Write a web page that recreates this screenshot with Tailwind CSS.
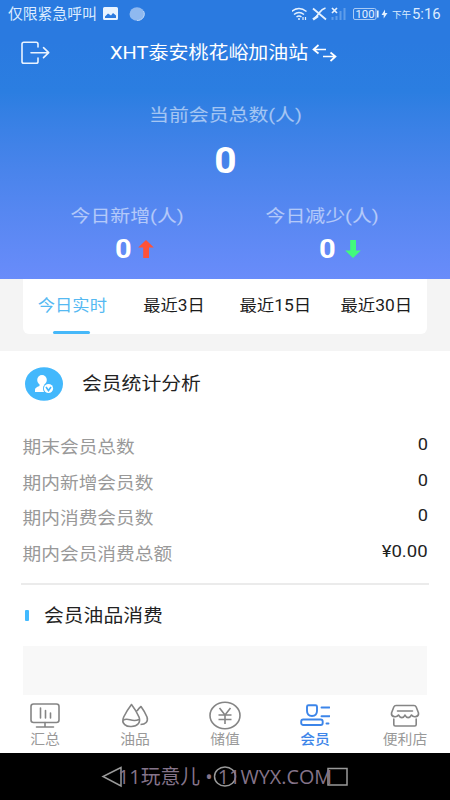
<!DOCTYPE html>
<html lang="zh-CN">
<head>
<meta charset="utf-8">
<title>会员</title>
<script src="https://cdn.jsdelivr.net/npm/@tailwindcss/browser@4"></script>
</head>
<body class="w-[450px] h-[800px] overflow-hidden bg-white font-['Roboto','Noto_Sans_CJK_SC',sans-serif]">
<div class="flex flex-col w-[450px] h-[800px]">
  <header class="h-[279px] shrink-0 bg-linear-to-b from-[#2a7ae0] from-15% via-[#2b7ee1] via-33% to-[#698cfa] text-white">
    <div class="h-7 flex items-center pl-2 pr-[10px] text-[#dcecff]">
      <span class="text-[14.8px] leading-7 whitespace-nowrap w-[89px]">仅限紧急呼叫</span>
      <svg class="ml-[6px]" width="15" height="14" viewBox="0 0 15 14"><path fill="#e8f3ff" fill-rule="evenodd" d="M1.500 0h12q1.500 0 1.500 1.500v10q0 1.500-1.500 1.500h-12Q0 13 0 11.500v-10Q0 0 1.500 0ZM2 11h11V8.500L10 6 8 8.500 5 6.500 2 9.500Z"/></svg>
      <svg class="ml-[11px]" width="16" height="14" viewBox="0 0 16 14"><ellipse cx="8" cy="7" rx="7.500" ry="6.800" fill="#8fb9f0"/><path d="M8 13.500A7 6.500 0 0 0 14.500 4" fill="none" stroke="#bdd8f9"/></svg>
      <div class="ml-auto flex items-center">
        <svg width="56" height="14" viewBox="0 0 56 14" fill="none" stroke="#e4f1ff" stroke-width="1.500">
          <path d="M-.5 4.500Q7-1.500 14.500 4.500M2 7.500Q7 3.500 12 7.500M4.500 10Q7 8 9.500 10"/><circle cx="7" cy="12" r="1" fill="#e4f1ff" stroke="none"/><path d="M11 10v3M13.500 13v-3" stroke-width="1.200"/>
          <path d="M21 1.500l13 11M33.500 1Q30 2 27.500 5.500L23 11.500" stroke-width="1.800"/><path d="M21 12.500l5-3.500" stroke-width="2.500"/>
          <path d="M40 1l5 5M45 1l-5 5" stroke-width="1.700"/><path stroke="#5f9dea" stroke-width="2" d="M40.500 13v-3M44.500 13V9M48.500 13V4M52.500 13V1"/>
        </svg>
        <svg class="ml-[5px]" width="36" height="12" viewBox="0 0 36 12"><rect x=".5" y=".5" width="22.500" height="11" rx="1.500" fill="none" stroke="#a9cbf5"/><text x="2.500" y="10" font-size="11" textLength="19" lengthAdjust="spacingAndGlyphs" fill="#e4f1ff">100</text><path d="M24.800 2.500v7" stroke="#e4f1ff" stroke-width="1.600"/><path d="M32 1.500L28.500 7h2.200v3.500L34.500 5h-2.400z" fill="#e4f1ff"/></svg>
        <span class="ml-[3px] text-[9.500px] leading-7 w-[20px] pt-[2px] whitespace-nowrap">下午</span>
        <span class="text-[14px] leading-7 w-[28px] whitespace-nowrap origin-left scale-x-[1.060]">5:16</span>
      </div>
    </div>
    <div class="h-[50px] flex items-center pl-[21px]">
      <svg width="29" height="24" viewBox="0 0 29 24" fill="none" stroke="#e9f3ff" stroke-width="1.600" stroke-linejoin="round" stroke-linecap="round"><path d="M17 6V3q0-1.800-1.800-1.800H2.800Q1 1.200 1 3v17.500q0 1.800 1.800 1.800h12.400q1.800 0 1.800-1.800V17M10 11.700h17.500M22.500 6.700l5.200 5-5.200 5"/></svg>
      <div class="ml-[60px] w-[198px] text-[17.700px] leading-7 whitespace-nowrap"><span class="inline-block origin-left scale-x-[1.130]">XHT泰安桃花峪加油站</span></div>
      <svg class="ml-[4px]" width="25" height="18" viewBox="0 0 25 18" fill="none" stroke="#fff" stroke-width="1.700"><path d="M14 5.500H1.500M6.500 1L1.500 5.500l5 4M11 12.500h12.500M18.500 8.500l5 4-5 4.500"/></svg>
    </div>
    <div class="flex flex-col items-center pt-[22px] text-white/55">
      <span class="text-[17.300px] leading-[30px] scale-x-[1.150]">当前会员总数(人)</span>
      <strong class="h-[62px] leading-[62px] text-[36px] text-white font-bold scale-x-[1.080]">0</strong>
    </div>
    <div class="grid grid-cols-2 w-[390px] ml-[30px] pt-[9px] text-white/55">
      <div class="flex flex-col items-center">
        <span class="text-[17.300px] leading-[30px] scale-x-[1.150]">今日新增(人)</span>
        <div class="h-[36px] flex items-center gap-[8px] ml-[15px]"><strong class="text-[26px] leading-[36px] text-white scale-x-[1.120]">0</strong>
        <svg width="16" height="18" viewBox="0 0 16 18"><path fill="#ff5238" d="M8 0l7.800 7.500H11V18H5.200V7.500H.2z"/></svg></div>
      </div>
      <div class="flex flex-col items-center">
        <span class="text-[17.300px] leading-[30px] scale-x-[1.150]">今日减少(人)</span>
        <div class="h-[36px] flex items-center gap-[11px] ml-[36px]"><strong class="text-[26px] leading-[36px] text-white scale-x-[1.120]">0</strong>
        <svg width="16" height="18" viewBox="0 0 16 18"><path fill="#42fa7c" d="M8 18l7.800-7.500H11V0H5.200v10.500H.2z"/></svg></div>
      </div>
    </div>
  </header>

  <nav class="h-[72px] shrink-0 bg-[#f4f4f4] px-[23px]">
    <div class="h-[55px] bg-white rounded-b-md flex text-[15.700px] leading-[54px] text-[#1c1c1c] whitespace-nowrap">
      <div class="shrink-0 w-[99px] flex flex-col items-center text-[#55b9f2]"><span class="h-[52px] scale-x-[1.100]">今日实时</span><i class="block w-[37px] h-[3px] -ml-[2px] rounded-sm bg-[#46b8f9]"></i></div>
      <div class="shrink-0 w-[104px] text-center"><span class="inline-block scale-x-[1.100]">最近3日</span></div>
      <div class="shrink-0 w-[98px] text-center"><span class="inline-block scale-x-[1.110]">最近15日</span></div>
      <div class="shrink-0 w-[105px] text-center"><span class="inline-block scale-x-[1.110]">最近30日</span></div>
    </div>
  </nav>

  <main class="h-[344px] shrink-0 px-[22px]">
    <div class="h-[66px] flex items-center pl-[3px]">
      <svg width="38" height="34" viewBox="0 0 38 34"><ellipse cx="19" cy="17" rx="19" ry="16.800" fill="#43b8fc"/><ellipse cx="17" cy="13" rx="4.800" ry="5" fill="#fff"/><path fill="#fff" d="M14.500 16h5v3l2 1-1 5H10v-2.500q0-2 4.500-3.500z"/><circle cx="23.500" cy="21.500" r="5.500" fill="#43b8fc"/><circle cx="23.500" cy="21.500" r="4.600" fill="#fff"/><path d="M21 20l2.500 3.500L26 20" fill="none" stroke="#43b8fc" stroke-width="1.600"/></svg>
      <span class="ml-[19px] text-[18px] leading-7 text-[#222] origin-left scale-x-[1.100]">会员统计分析</span>
    </div>
    <dl class="pt-[13px] text-[#999] text-[17px] leading-[35px]">
      <div class="h-[35.600px] flex justify-between"><dt class="origin-left scale-x-[1.100] pl-[0.5px]">期末会员总数</dt><dd class="text-[#222] text-[16px] leading-[30px] origin-right scale-x-[1.140]">0</dd></div>
      <div class="h-[35.600px] flex justify-between"><dt class="origin-left scale-x-[1.100] pl-[0.5px]">期内新增会员数</dt><dd class="text-[#222] text-[16px] leading-[30px] origin-right scale-x-[1.140]">0</dd></div>
      <div class="h-[35.600px] flex justify-between"><dt class="origin-left scale-x-[1.100] pl-[0.5px]">期内消费会员数</dt><dd class="text-[#222] text-[16px] leading-[30px] origin-right scale-x-[1.140]">0</dd></div>
      <div class="h-[35.600px] flex justify-between"><dt class="origin-left scale-x-[1.100] pl-[0.5px]">期内会员消费总额</dt><dd class="text-[#222] text-[16px] leading-[30px] origin-right scale-x-[1.160]">¥0.00</dd></div>
    </dl>
    <div class="mt-[11px] -mx-px border-t-2 border-[#ebebeb] h-[63px] flex items-center pl-[4px]">
      <i class="block w-[4px] h-[11px] rounded-[1px] bg-[#42baff]"></i>
      <span class="ml-[15px] pt-px text-[18px] leading-7 text-[#222] origin-left scale-x-[1.100]">会员油品消费</span>
    </div>
    <div class="h-[49px] mx-px bg-[#f8f8f8]"></div>
  </main>

  <nav class="h-[58px] shrink-0 grid grid-cols-5 bg-white pt-[5px] text-[#999] text-[14px] leading-[18px]">
    <div class="flex flex-col items-center"><svg width="30" height="30" viewBox="0 0 30 30" fill="none" stroke="#858585" stroke-width="1.600" stroke-linecap="round"><rect x="1" y="4" width="28" height="18.500" rx="2.500"/><path d="M15 22.500v4M6.500 27h17M10.500 8v10M15.500 10.500V18M20.500 13v5"/></svg><span class="scale-x-[1.060]">汇总</span></div>
    <div class="flex flex-col items-center"><svg width="30" height="30" viewBox="0 0 30 30" fill="none" stroke="#858585" stroke-width="1.600" stroke-linejoin="round"><path d="M11.500 4.500Q6.500 11 3.700 17C.5 24 7 27 11.500 26.500c6 0 9.500-4 7.500-9.500Q16.500 11 11.500 4.500ZM3 20.500c5-4 8.500 2.500 16-1M17 11q2-3 4-4.500 4 5.500 6 10.500c1.500 4.500-1.500 7.500-6.500 7.500"/></svg><span class="scale-x-[1.060]">油品</span></div>
    <div class="flex flex-col items-center"><svg width="32" height="30" viewBox="0 0 32 30" fill="none" stroke="#858585" stroke-width="1.600"><ellipse cx="16" cy="15.500" rx="15" ry="13.300"/><path d="M10.500 8l5.500 7 5.500-7M9.500 15h13M9.500 19.500h13M16 15v9"/></svg><span class="scale-x-[1.060]">储值</span></div>
    <div class="flex flex-col items-center text-[#3c85e9]"><svg width="30" height="30" viewBox="0 0 30 30" fill="none" stroke="currentColor" stroke-width="1.900" stroke-linecap="round"><path d="M8.500 5.300h7q1.500 0 1.500 1.500v4q0 5.200-5 5.200t-5-5.200v-4q0-1.500 1.500-1.500Z"/><rect x="1.200" y="19.500" width="21.500" height="5.500" rx="2"/><path d="M21.500 7.500h8M21.500 16.200h8M26.500 23.500h2"/></svg><span class="scale-x-[1.060] font-medium">会员</span></div>
    <div class="flex flex-col items-center"><svg width="30" height="30" viewBox="0 0 30 30" fill="none" stroke="#858585" stroke-width="1.600" stroke-linejoin="round" stroke-linecap="round"><path d="M6 5.500h18q1.500 0 2.200 1.500l2.300 6c.5 4-5 5-7 2-2 3.500-5 3.500-6.500 0-1.500 3.500-4.500 3.500-6.500 0-2 3-7.500 2-7-2L3.800 7Q4.500 5.500 6 5.500ZM7.500 11h15M3.800 19v5.500q0 1.500 1.500 1.500h19.400q1.500 0 1.500-1.500V19"/></svg><span class="scale-x-[1.060]">便利店</span></div>
  </nav>

  <footer class="h-[47px] shrink-0 bg-black relative">
    <svg width="450" height="47" viewBox="0 0 450 47" fill="none" stroke="#9a9a9a" stroke-width="1.500"><path d="M121 14.500 103 23.500l18 9.500z"/><ellipse cx="225" cy="23.500" rx="10.500" ry="9.500"/><rect x="328" y="15.500" width="19" height="16.500"/></svg>
    <div class="absolute left-[118px] top-[9px] text-[20px] leading-[30px] whitespace-nowrap text-[#85748a] font-['Open_Sans','Noto_Sans_CJK_SC',sans-serif]"><span class="inline-block origin-left scale-x-[0.990]">11玩意儿 • 11WYX.COM</span></div>
  </footer>
</div>
</body>
</html>
